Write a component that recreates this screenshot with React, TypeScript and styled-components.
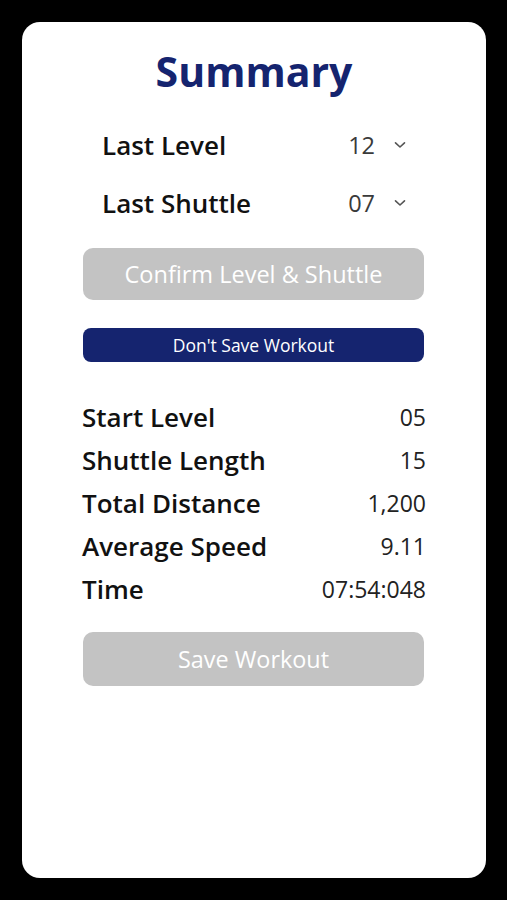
import React from 'react';
import styled, { createGlobalStyle } from 'styled-components';

const GlobalStyle = createGlobalStyle`
  html, body {
    margin: 0;
    padding: 0;
    background: #000;
  }
  body {
    font-family: 'Open Sans', 'Noto Sans', sans-serif;
  }
`;

const NAVY = '#15246f';
const GREY_BUTTON = '#c3c3c3';

const selectRows = [
  { label: 'Last Level', value: '12' },
  { label: 'Last Shuttle', value: '07' },
];

const stats = [
  { label: 'Start Level', value: '05' },
  { label: 'Shuttle Length', value: '15' },
  { label: 'Total Distance', value: '1,200' },
  { label: 'Average Speed', value: '9.11' },
  { label: 'Time', value: '07:54:048' },
];

const Chevron: React.FC = () => (
  <svg width="12" height="8" viewBox="0 0 12 8" fill="none">
    <path d="M1.5 1.8 L6 6 L10.5 1.8" stroke="#555" strokeWidth="1.6" strokeLinecap="round" strokeLinejoin="round" />
  </svg>
);

const App: React.FC = () => {
  return (
    <>
      <GlobalStyle />
      <SPage>
        <SCard>
          <STitle>Summary</STitle>

          <SSelectList>
            {selectRows.map((row) => (
              <SSelectRow key={row.label}>
                <SSelectLabel>{row.label}</SSelectLabel>
                <SSelectValue>
                  <span>{row.value}</span>
                  <Chevron />
                </SSelectValue>
              </SSelectRow>
            ))}
          </SSelectList>

          <SButton height={52} fontSize={23.5} marginTop={27} background={GREY_BUTTON} radius={10}>
            Confirm Level &amp; Shuttle
          </SButton>
          <SButton height={34} fontSize={17.5} marginTop={28} background={NAVY} radius={8}>
            Don't Save Workout
          </SButton>

          <SStats>
            {stats.map((item) => (
              <SStatRow key={item.label}>
                <SStatLabel>{item.label}</SStatLabel>
                <SStatValue>{item.value}</SStatValue>
              </SStatRow>
            ))}
          </SStats>

          <SButton height={54} fontSize={23.4} marginTop={21} background={GREY_BUTTON} radius={10}>
            Save Workout
          </SButton>
        </SCard>
      </SPage>
    </>
  );
};

const SPage = styled.div`
  display: flex;
  justify-content: center;

  width: 507px;
  height: 900px;
  padding-top: 22px;
  box-sizing: border-box;
  background: #000;
`;

const SCard = styled.div`
  display: flex;
  flex-direction: column;
  align-items: stretch;

  width: 464px;
  height: 856px;
  margin-left: 1px;
  padding: 21px 0 0;
  box-sizing: border-box;
  border-radius: 18px;
  background: #fff;
`;

const STitle = styled.h1`
  margin: 0;
  font-size: 41px;
  line-height: 56px;
  font-weight: 700;
  text-align: center;
  color: ${NAVY};
`;

const SSelectList = styled.div`
  display: flex;
  flex-direction: column;
  gap: 22px;

  margin-top: 28px;
  padding: 0 80px;
`;

const SSelectRow = styled.div`
  display: flex;
  align-items: center;
  justify-content: space-between;
  height: 36px;
`;

const SSelectLabel = styled.span`
  font-size: 26px;
  line-height: 36px;
  font-weight: 600;
  color: #111;
`;

const SSelectValue = styled.span`
  display: flex;
  align-items: center;
  gap: 19px;

  font-size: 23.5px;
  line-height: 36px;
  color: #3a3a3a;
`;

const SButton = styled.div<{
  height: number;
  fontSize: number;
  marginTop: number;
  background: string;
  radius: number;
}>`
  display: flex;
  align-items: center;
  justify-content: center;

  height: ${(p) => p.height}px;
  margin: ${(p) => p.marginTop}px 62px 0 61px;
  border-radius: ${(p) => p.radius}px;
  background: ${(p) => p.background};
  color: #fff;
  font-size: ${(p) => p.fontSize}px;
`;

const SStats = styled.div`
  display: flex;
  flex-direction: column;

  margin-top: 34px;
  padding: 0 60px;
`;

const SStatRow = styled.div`
  display: flex;
  align-items: center;
  justify-content: space-between;
  height: 43px;
`;

const SStatLabel = styled.span`
  font-size: 26px;
  line-height: 43px;
  font-weight: 600;
  color: #111;
`;

const SStatValue = styled.span`
  font-size: 23px;
  line-height: 43px;
  color: #222;
`;

export default App;
